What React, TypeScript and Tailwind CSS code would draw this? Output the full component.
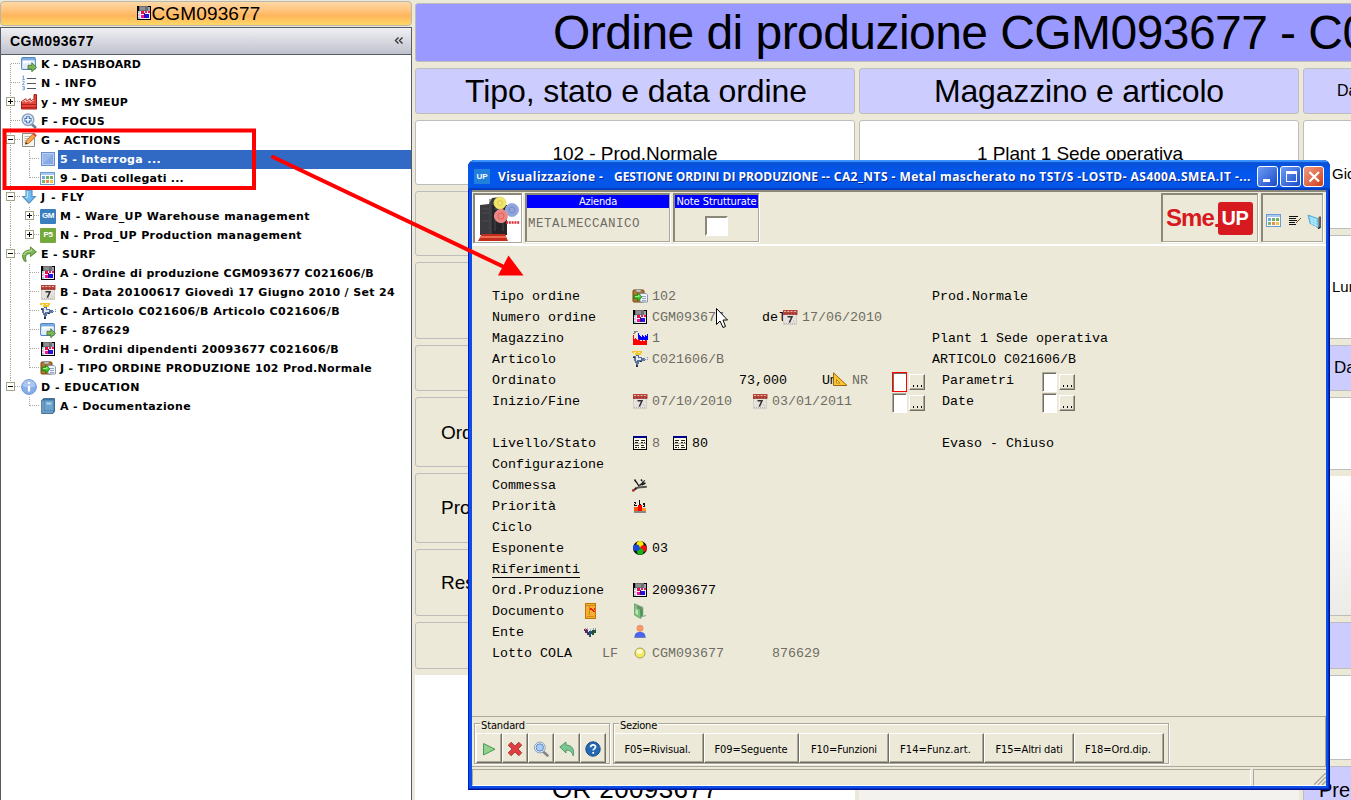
import React, { useLayoutEffect, useRef } from 'react';

/* Single-line text whose tracking is computed so that it spans `w` pixels. */
function Fit({ w, children, className = '' }: { w: number; children: string; className?: string }) {
  const ref = useRef<HTMLSpanElement>(null);
  useLayoutEffect(() => {
    const el = ref.current;
    if (!el) return;
    el.style.letterSpacing = '0px';
    const natural = el.getBoundingClientRect().width;
    el.style.letterSpacing = `${(w - natural) / children.length}px`;
  }, [w, children]);
  return (
    <span ref={ref} className={`inline-block whitespace-pre ${className}`}>
      {children}
    </span>
  );
}

function Svg({ children, className = 'mb-px h-4 w-4', box = '0 0 16 16', crisp = false }: { children: React.ReactNode; className?: string; box?: string; crisp?: boolean }) {
  return (
    <svg viewBox={box} className={`shrink-0 ${className}`} shapeRendering={crisp ? 'crispEdges' : 'auto'}>
      {children}
    </svg>
  );
}

/* ---------- icons ---------- */
const OrderIcon = () => (
  <Svg crisp>
    <rect x="1" y="1" width="14" height="14" fill="#000" />
    <rect x="3" y="1" width="9" height="5" fill="#6f6f6f" />
    <rect x="4" y="2" width="5" height="3" fill="#8e8e8e" />
    <rect x="12" y="2" width="2" height="4" fill="#9ea2b4" />
    <rect x="2" y="6" width="12" height="8" fill="#f4eef4" />
    <rect x="2" y="6" width="2" height="2" fill="#8fd8e4" />
    <rect x="5" y="6" width="3" height="3" fill="#e81048" />
    <rect x="9" y="6" width="2" height="2" fill="#d82070" />
    <rect x="12" y="6" width="2" height="2" fill="#e02050" />
    <rect x="2" y="9" width="2" height="2" fill="#e8b0e0" />
    <rect x="2" y="12" width="2" height="2" fill="#90d0d8" />
    <rect x="5" y="10" width="3" height="3" fill="#f0109a" />
    <rect x="9" y="9" width="4" height="4" fill="#2010f0" />
    <rect x="8" y="8" width="1" height="5" fill="#501040" />
  </Svg>
);
const WindowGoIcon = () => (
  <Svg>
    <rect x=".7" y="1.7" width="13.6" height="11.6" rx="1" fill="#fff" stroke="#4e86c6" strokeWidth="1.2" />
    <rect x="1" y="2" width="13" height="2.4" fill="#7aa9e0" />
    <path d="M1.4 8 L13.6 5 V12.6 H1.4Z" fill="#e4eefb" />
    <path d="M7 9.3 h3.8 v-2.6 l4.7 4.6 -4.7 4.4 v-2.5 h-3.8z" fill="#7cb45a" stroke="#467a30" strokeWidth=".9" />
  </Svg>
);
const ListIcon = () => (
  <Svg>
    <path d="M6 3.5h9M6 8.5h9M6 13.5h9" stroke="#51575f" strokeWidth="1.1" />
    <path d="M1.3 1.6 L2.5 .8 V4.4 M1.3 4.5h2.6 M1.2 6.3h2v1.5l-2 1.8h2.4 M1.2 11.4h2.2v3.4h-2.2 M1.6 13h1.8" fill="none" stroke="#7fa7dc" strokeWidth="1" />
  </Svg>
);
const FactoryRedIcon = () => (
  <Svg>
    <path d="M.5 15V7.5L5 4.7v2.6l4.3-2.6v2.6L13 5V.6h2.5V15z" fill="#e2463c" stroke="#a91b16" />
    <path d="M1.2 8 L4.6 5.8 V8.2 L9 6 v2.2L12.8 6" stroke="#ffc5b5" fill="none" />
    <path d="M1 10.500h14M1 13.5h14" stroke="#b51f1a" strokeWidth="1.1" />
  </Svg>
);
const ZoomPlusIcon = () => (
  <Svg>
    <path d="M10.5 11l4.5 4" stroke="#6d7f98" strokeWidth="2.6" />
    <circle cx="7" cy="6.7" r="5.8" fill="#e8f2ff" stroke="#93a4ba" strokeWidth="1.5" />
    <circle cx="7" cy="6.7" r="4.4" fill="#cfe2fb" />
    <path d="M7 3.2v7M3.5 6.700h7" stroke="#3c70b8" strokeWidth="3.6" />
    <path d="M7 4v5.400M4.300 6.700h5.400" stroke="#fff" strokeWidth="1.500" />
  </Svg>
);
const EditIcon = () => (
  <Svg>
    <path d="M1.5 1.5h12v13h-12z" fill="#f6f6f2" stroke="#8f8f8a" />
    <path d="M3.5 4.5h6M3.5 6.5h5M3.5 8.5h3M3.5 10.5h2" stroke="#b9b9b4" />
    <path d="M4.3 12.2l1-3.6 6.7-6.7 2.7 2.6-6.8 6.8z" fill="#f7a44a" stroke="#b45d17" strokeWidth=".8" />
    <path d="M11.7 1.9l1.2-1.2 3 2.5-1.3 1.5z" fill="#e8403c" />
    <path d="M4.3 12.2l.7-2 1.5 1.3z" fill="#222" />
  </Svg>
);
const BlueSquareIcon = () => (
  <Svg>
    <rect x="1.5" y="1.5" width="13" height="13" fill="#86a8e4" stroke="#6a90cf" />
    <rect x="2.5" y="2.5" width="11" height="11" fill="none" stroke="#b7cdf2" />
    <path d="M3 3h10L3 13z" fill="#9ab8ec" />
  </Svg>
);
const TableIcon = () => (
  <Svg crisp>
    <rect x="0" y="2" width="15" height="13" rx="1" fill="#6d9cd4" />
    <rect x="1" y="3" width="13" height="2" fill="#a9c8ef" />
    <rect x="1" y="5" width="13" height="9" fill="#fff" />
    <rect x="2" y="6" width="3" height="3" fill="#78a5dc" />
    <rect x="6" y="6" width="3" height="3" fill="#74b060" />
    <rect x="10" y="6" width="3" height="3" fill="#74b060" />
    <rect x="2" y="10" width="3" height="3" fill="#7fb468" />
    <rect x="6" y="10" width="3" height="3" fill="#f08a4a" />
    <rect x="10" y="10" width="3" height="3" fill="#ecc548" />
  </Svg>
);
const DownIcon = () => (
  <Svg>
    <path d="M5 1.2h6v6.3h3.4L8 14.2 1.6 7.5H5z" fill="#6cbdf3" stroke="#5c8fb8" strokeWidth="1.1" />
    <path d="M6.3 2v6.5H4.5" stroke="#d3f0ff" fill="none" />
  </Svg>
);
const Badge = ({ t, c }: { t: string; c: string }) => (
  <span className={`mb-px flex h-[15px] w-4 shrink-0 items-center justify-center rounded-[1px] font-['Liberation_Sans'] text-[8px] font-bold leading-none tracking-[-0.5px] text-white ${c}`}>{t}</span>
);
const TurnIcon = () => (
  <Svg>
    <path d="M3.6 15.3C-.7 9.5 2.3 4 9.4 4V.9l6 5-6 4.7V7.5C5.200 7.500 3.600 10.500 5.200 15.300z" fill="#7fb851" stroke="#4c7f2c" strokeWidth=".9" />
    <path d="M2.700 9C4 5.500 7 5 10.200 5V2.800" stroke="#c4e6a0" fill="none" />
  </Svg>
);
const CalendarIcon = () => (
  <Svg>
    <rect x="1.500" y="2.500" width="13" height="13" fill="#e6e2dd" stroke="#d3cec8" />
    <rect x="1" y="1" width="14.500" height="4.800" fill="#b5453b" />
    <path d="M2 2.500h13" stroke="#e9b4a8" strokeDasharray="2 1.300" />
    <path d="M1 5h14" stroke="#8d2a24" strokeDasharray="2 1" />
    <path d="M5.500 7.800h4.500L7.300 13.600" fill="none" stroke="#333" strokeWidth="1.500" />
    <path d="M2 14.500h12M11 11.500l3 2" stroke="#b8b4ae" strokeDasharray="1 1" />
  </Svg>
);
const ArticleIcon = () => (
  <Svg crisp>
    <path d="M0 0h10v2H9v2H3V2H0z" fill="#f7c52a" />
    <path d="M2 1h2v1H2zM6 1h2v1H6z" fill="#fff3a0" />
    <path d="M4 4h3v2h3v1h3v3H9v1H7v2H6v2H4v-3H3v-2H2V7H1V5h3z" fill="#5a719c" />
    <path d="M4 5h2v2h3v2H5v1H4z" fill="#e0e8f8" />
    <path d="M1 6h2v1H1zM8 10h2v1H8zM4 14h2v2H4z" fill="#22304f" />
    <path d="M12 8h2v1h-2zM15 6h1v1h-1zM15 8h1v1h-1z" fill="#7d93c4" />
  </Svg>
);
const TypeIcon = () => (
  <Svg>
    <rect x="1" y="2" width="11" height="12" rx="1" fill="#b5772b" stroke="#754711" />
    <path d="M4 1.500h5v2.500H4z" fill="#c9c9c9" stroke="#777" strokeWidth=".6" />
    <path d="M8 5.500h6l1.500 1.500v7H8z" fill="#f0f4fb" stroke="#7285a5" strokeWidth=".8" />
    <path d="M10 8.500h4M10 10.500h4M10 12.500h4" stroke="#8b9bb8" strokeWidth=".9" />
    <path d="M2.200 7.300h3.300V5l4.500 4-4.500 4v-2.400H2.200z" fill="#37c82b" stroke="#107a10" strokeWidth=".7" />
    <path d="M3 8.500h3.500V7l1.500 1.700" stroke="#bdf7a0" fill="none" strokeWidth=".8" />
  </Svg>
);
const InfoIcon = () => (
  <Svg>
    <circle cx="8" cy="8" r="7.400" fill="#86aee8" stroke="#7196d8" />
    <path d="M1.500 7a6.500 6 0 0113 0c-4 2-9 2-13 0z" fill="#a9c6f2" />
    <path d="M8 3v2M8 6.800v5.700" stroke="#fff" strokeWidth="2.200" />
  </Svg>
);
const BookIcon = () => (
  <Svg>
    <path d="M1.700 2.500L3.500.600h11v13l-1.700 2H1.700z" fill="#3d76a8" stroke="#285680" strokeWidth=".8" />
    <path d="M4.500 2.500h9v10h-9z" fill="#6ea3cc" />
    <path d="M6.500 4.500h5v2h-5z" fill="#b6d4ea" />
    <path d="M3 2.500V15M4 14h9" stroke="#b9d8ee" strokeWidth=".8" />
  </Svg>
);
const FactoryIcon = () => (
  <Svg crisp>
    <path d="M2 1h4v1H4v1H2zM1 3h2v1H1z" fill="#888" />
    <path d="M6 10V3h1v2h1v1h1v1h1V5h1v1h1v1h1V5h1v1h1V4h1v6z" fill="#00f" />
    <path d="M1 15V5h1v4h1V8h1v1h1v1h1V9h1v1h1v1h2v-1h1v1h2v-1h2v5z" fill="#f00" />
  </Svg>
);
const LevelIcon = () => (
  <Svg crisp>
    <rect x="1" y="1" width="14" height="14" fill="#000" />
    <rect x="2" y="3" width="12" height="11" fill="#fbf8e4" />
    <rect x="1" y="1" width="14" height="2" fill="#00008f" />
    <path d="M3 5h4v1H3zM9 5h4v1H9zM3 7h3v1H3zM9 7h2v1H9zM12 7h1v1h-1zM3 10h4v1H3zM9 10h3v1H9zM3 12h2v1H3zM6 12h1v1H6zM9 12h4v1H9z" fill="#222" />
    <path d="M2 8h12v1H2z" fill="#aaa" />
  </Svg>
);
const CommessaIcon = () => (
  <Svg>
    <path d="M.8 13.600L6 10.500 14.800 9.800" stroke="#555" strokeWidth="2" fill="none" />
    <path d="M2.500 2.500L7 9.500M7.500 8.500L13 3.500M9 2.500l1.500 2M13.500 6L9.500 8M4 10.500L3 12.500" stroke="#1c1c1c" strokeWidth="1.500" fill="none" />
    <path d="M3.200 5.500L6 9.500M10.500 3.500L8.500 6.500M12.500 5l1-1.500" stroke="#fff" strokeWidth=".8" />
    <path d="M0 12.500h2.500v2H0z" fill="#c22" />
  </Svg>
);
const PriorityIcon = () => (
  <Svg crisp>
    <path d="M2 9h4v4H2z" fill="#f50" />
    <path d="M6 7h4v6H6z" fill="#f00" />
    <path d="M10 10h4v3h-4z" fill="#ff9a20" />
    <path d="M2 13h12v2H2z" fill="#888" />
    <path d="M7 2h1v4h1v1H7V3H6zM2 4h2v2H3v1h2v1H2V6h1V5H2zM11 5h2v4h-2V8h1V7h-1z" fill="#111" />
  </Svg>
);
const BallIcon = () => (
  <Svg>
    <circle cx="8" cy="8" r="7" fill="#111" />
    <circle cx="8" cy="4.600" r="3.500" fill="#fbe800" />
    <circle cx="11.500" cy="8.500" r="3.300" fill="#ee1111" />
    <circle cx="8.200" cy="11.600" r="3.200" fill="#10b510" />
    <circle cx="4.400" cy="7.800" r="3.300" fill="#1a48d8" />
  </Svg>
);
const DoorIcon = () => (
  <Svg className="mb-px h-4 w-[13px]" box="0 0 13 16" crisp>
    <rect x="1" y="0" width="11" height="16" fill="#c07808" />
    <rect x="2" y="1" width="9" height="14" fill="#f9ad2e" />
    <path d="M2 2h9v1H2zM5 3h1v9H5zM3 13h7v1H3z" fill="#c98a20" />
    <path d="M6 5h2v1h1v1h1V5h1v2h-1v1h1v1H9V8H8V7H6z" fill="#f21a10" />
  </Svg>
);
const DocIcon = () => (
  <Svg>
    <path d="M2.500.8l5.500 2.500 2.800 1v8L8.500 15.500l-6-3.500z" fill="#7cc27c" stroke="#5ea062" strokeWidth=".8" />
    <path d="M8 5.500h2.500v7L8.500 14.800z" fill="#4a9256" />
    <path d="M3.500 6l2.500 1.500v4.500L3.500 10.500z" fill="#bfe6b8" />
    <path d="M5 2.500l4.500 1.800v3L5.500 5.500z" fill="#76857a" />
    <path d="M10.500 13.500l3.500-1" stroke="#999" strokeWidth="1.300" />
  </Svg>
);
const PeopleIcon = () => (
  <Svg className="mb-px h-4 w-[13px]" box="0 0 13 16" crisp>
    <path d="M0 5h4v3h1v3H3V9H1V7H0z" fill="#4d2b66" />
    <path d="M1 4h1v2H1zM3 4h1v2H3z" fill="#d08a98" />
    <path d="M5 7h3v3H7v3H5z" fill="#1c5474" />
    <path d="M6 5h1v2H6z" fill="#8ab6d0" />
    <path d="M8 6h4v3h-2v2H8z" fill="#24503c" />
    <path d="M9 4h1v2H9zM11 4h1v2h-1z" fill="#7aa0a8" />
  </Svg>
);
const PersonIcon = () => (
  <Svg>
    <path d="M2.500 13.500C2.500 9 5 8 8 8s5.500 1 5.500 5.500z" fill="#4a66ee" />
    <path d="M2.500 13.500h11" stroke="#777fae" />
    <circle cx="8" cy="4.300" r="3.100" fill="#f89a68" stroke="#d97850" strokeWidth=".6" />
  </Svg>
);
const LotIcon = () => (
  <Svg>
    <circle cx="8" cy="8" r="5" fill="#f4ea62" stroke="#a6a05a" />
    <ellipse cx="7.500" cy="6.500" rx="3" ry="2.300" fill="#fffbd0" />
  </Svg>
);
const RulerIcon = () => (
  <Svg>
    <path d="M1.500 .8L15 13.500H1.500z" fill="#ffc629" stroke="#9a6410" />
    <path d="M4.500 7.500l3.500 3.500H4.500z" fill="#fff0a0" stroke="#b77a14" strokeWidth=".9" />
  </Svg>
);
const NoteIcon = () => (
  <Svg className="h-4 w-[14px]" box="0 0 14 16" crisp>
    <path d="M1 3h9v1H1zM1 5h7v1H1zM1 7h8v1H1zM1 9h6v1H1zM1 11h7v1H1z" fill="#111" />
    <path d="M12 5h1v1h-1v1h-1v1h-1v1H9v1H8V9h1V8h1V7h1V6h1z" fill="#7b4a14" />
  </Svg>
);
const NotebookIcon = () => (
  <Svg className="h-4 w-[14px]" box="0 0 14 16">
    <path d="M1 2l9.500 3.500L12 15l-9-4.500z" fill="#6fcdf5" stroke="#3f9ad0" strokeWidth=".7" />
    <path d="M2.500 4.500l7.500 3M3 7l7.500 3M3.500 9.500l7.500 3.500M5 4v8M8 5v9" stroke="#d8f6ff" strokeWidth=".7" />
    <path d="M13 3.500v11l-2 1" stroke="#111" strokeWidth="1.300" fill="none" />
    <path d="M11.700 4v10" stroke="#888" strokeWidth="1" />
  </Svg>
);

/* ---------- tree ---------- */
type Guide = 'tee' | 'end' | 'line' | 'none' | 'start';
const GuideCell = ({ kind, box, w }: { kind: Guide; box?: '+' | '-'; w: 19 | 20 }) => (
  <svg className={w === 20 ? 'h-[19px] w-5 shrink-0' : 'h-[19px] w-[19px] shrink-0'} viewBox={`0 0 ${w} 19`} shapeRendering="crispEdges">
    {kind !== 'none' && (
      <path d={kind === 'line' || kind === 'tee' ? 'M9.500 0V19' : kind === 'start' ? 'M9.500 9V19' : 'M9.500 0V9'} stroke="#a9a795" strokeDasharray="1 1" fill="none" />
    )}
    {(kind === 'tee' || kind === 'end' || kind === 'start') && <path d="M10 8.500H20" stroke="#a9a795" strokeDasharray="1 1" />}
    {box && (
      <>
        <rect x="5.500" y="4.500" width="8" height="8" fill="#fff" stroke="#a5a28c" />
        <path d={box === '+' ? 'M7 8.500h5M9.500 6v5' : 'M7 8.500h5'} stroke="#000" />
      </>
    )}
  </svg>
);
type Node = { t: string; w: number; icon: React.ReactNode; g: Guide; lv: 1 | 2; box?: '+' | '-'; sel?: boolean; last?: boolean };
const nodes: Node[] = [
  { t: 'K - DASHBOARD', w: 100, icon: <WindowGoIcon />, g: 'start', lv: 1 },
  { t: 'N - INFO', w: 56, icon: <ListIcon />, g: 'tee', lv: 1 },
  { t: 'y - MY SMEUP', w: 87, icon: <FactoryRedIcon />, g: 'tee', lv: 1, box: '+' },
  { t: 'F - FOCUS', w: 64, icon: <ZoomPlusIcon />, g: 'tee', lv: 1 },
  { t: 'G - ACTIONS', w: 80, icon: <EditIcon />, g: 'tee', lv: 1, box: '-' },
  { t: '5 - Interroga ...', w: 101, icon: <BlueSquareIcon />, g: 'tee', lv: 2, sel: true },
  { t: '9 - Dati collegati ...', w: 124, icon: <TableIcon />, g: 'end', lv: 2 },
  { t: 'J - FLY', w: 44, icon: <DownIcon />, g: 'tee', lv: 1, box: '-' },
  { t: 'M - Ware_UP Warehouse management', w: 250, icon: <Badge t="GM" c="bg-[#3b7fc0]" />, g: 'tee', lv: 2, box: '+' },
  { t: 'N - Prod_UP Production management', w: 242, icon: <Badge t="P5" c="bg-[#74a93c]" />, g: 'end', lv: 2, box: '+' },
  { t: 'E - SURF', w: 55, icon: <TurnIcon />, g: 'tee', lv: 1, box: '-' },
  { t: 'A - Ordine di produzione CGM093677 C021606/B', w: 314, icon: <OrderIcon />, g: 'tee', lv: 2 },
  { t: 'B - Data 20100617 Giovedì 17 Giugno 2010 / Set 24', w: 335, icon: <CalendarIcon />, g: 'tee', lv: 2 },
  { t: 'C - Articolo C021606/B Articolo C021606/B', w: 280, icon: <ArticleIcon />, g: 'tee', lv: 2 },
  { t: 'F - 876629', w: 70, icon: <WindowGoIcon />, g: 'tee', lv: 2 },
  { t: 'H - Ordini dipendenti 20093677 C021606/B', w: 279, icon: <OrderIcon />, g: 'tee', lv: 2 },
  { t: 'J - TIPO ORDINE PRODUZIONE 102 Prod.Normale', w: 312, icon: <TypeIcon />, g: 'end', lv: 2 },
  { t: 'D - EDUCATION', w: 99, icon: <InfoIcon />, g: 'end', lv: 1, box: '-' },
  { t: 'A - Documentazione', w: 131, icon: <BookIcon />, g: 'end', lv: 2, last: true },
];

function Sidebar() {
  return (
    <aside className="flex h-full w-[412px] shrink-0 flex-col">
      <div className="flex h-[27px] pt-px">
        <div className="flex h-[25px] w-full items-center justify-center rounded-[4px] border border-[#b9b7ad] bg-linear-to-b from-[#ffd9a6] from-0% via-[#ffb55c] via-60% to-[#ffd766] to-100% pr-4">
          <OrderIcon />
          <Fit w={109} className="mt-px font-['Liberation_Sans'] text-[19px] leading-6">CGM093677</Fit>
        </div>
      </div>
      <div className="flex min-h-0 flex-1 flex-col border border-b-0 border-[#565b68] bg-white">
        <div className="flex h-[27px] shrink-0 items-center justify-between border-b border-[#565b68] bg-linear-to-b from-[#f1f1f4] to-[#bfc1cd] pl-[9px] pr-[7px]">
          <Fit w={84} className="font-['Liberation_Sans'] text-[14px] font-bold">CGM093677</Fit>
          <svg viewBox="0 0 10 10" className="h-[10px] w-[10px]">
            <path d="M4.500 1.500L1.500 4.500l3 3M8.500 1.500L5.500 4.500l3 3" fill="none" stroke="#333" strokeWidth="1.400" />
          </svg>
        </div>
        <div className="flex flex-col">
          {nodes.map((n) => (
            <div key={n.t} className="flex h-[19px] items-center">
              {n.lv === 2 && <GuideCell kind={n.last ? 'none' : 'line'} w={19} />}
              <GuideCell kind={n.g} box={n.box} w={20} />
              {n.icon}
              <div className={`ml-[2px] flex h-[19px] flex-1 items-center pl-[2px] ${n.sel ? 'bg-[#316ac5] text-white' : 'text-black'}`}>
                <Fit w={n.w} className="font-['DejaVu_Sans'] text-[11px] font-bold leading-[19px]">{n.t}</Fit>
              </div>
            </div>
          ))}
        </div>
      </div>
    </aside>
  );
}

/* ---------- sheet behind the dialog ---------- */
const Cell = ({ c, children }: { c: string; children?: React.ReactNode }) => (
  <div className={`flex w-full shrink-0 items-center overflow-hidden whitespace-nowrap rounded-[3px] border border-[#bdbdbd] ${c}`}>{children}</div>
);

function Sheet() {
  return (
    <main className="flex min-w-0 flex-1 flex-col gap-[6px] overflow-hidden pl-[3px] pt-[3px] font-['Liberation_Sans'] text-black">
      <div className="flex h-[59px] w-[1200px] shrink-0 items-center rounded-[3px] border border-[#bdbdbd] bg-[#9999ff] pl-[137px]">
        <span className="whitespace-nowrap text-[48px] leading-none tracking-[-0.56px]">Ordine di produzione CGM093677 - C021606/B</span>
      </div>
      <div className="flex w-[1200px] gap-1">
        <div className="flex w-[440px] shrink-0 flex-col gap-[6px]">
          <Cell c="h-[46px] justify-center bg-[#ccccff] pl-[2px]"><Fit w={342} className="text-[32px] leading-none">Tipo, stato e data ordine</Fit></Cell>
          <Cell c="h-[65px] justify-center bg-white pt-[3px]"><Fit w={165} className="text-[19px]">102 - Prod.Normale</Fit></Cell>
          <Cell c="h-[65px]" />
          <Cell c="h-[77px]" />
          <Cell c="h-[46px]" />
          <Cell c="h-[70px] pl-[25px] pt-[2px] text-[19px]">Ord.</Cell>
          <Cell c="h-[70px] pl-[25px] pt-px text-[19px]">Prod.</Cell>
          <Cell c="h-[67px] pl-[25px] pt-px text-[19px]">Res.</Cell>
          <Cell c="h-[47px]" />
          <div className="flex h-[232px] items-center justify-center bg-white pb-[4px]"><Fit w={166} className="text-[26px]">OR 20093677</Fit></div>
        </div>
        <div className="flex w-[440px] shrink-0 flex-col gap-[6px]">
          <Cell c="h-[46px] justify-center bg-[#ccccff]"><Fit w={290} className="text-[32px] leading-none">Magazzino e articolo</Fit></Cell>
          <Cell c="h-[65px] justify-center bg-white pl-[2px] pt-[3px]"><Fit w={206} className="text-[19px]">1 Plant 1 Sede operativa</Fit></Cell>
          <div className="h-[620px] bg-[#f4f2ee]" />
        </div>
        <div className="flex w-[300px] shrink-0 flex-col gap-[6px]">
          <Cell c="h-[46px] bg-[#ccccff] pl-[33px] text-[16px]">Data</Cell>
          <Cell c="h-[109px] bg-white pl-[28px] text-[15px]">Giovedì</Cell>
          <Cell c="h-[104px] bg-white pl-[28px] text-[15px]">Lunedì</Cell>
          <Cell c="h-[46px] bg-[#ccccff] pl-[30px] text-[17px]">Data</Cell>
          <Cell c="h-[73px] bg-white" />
          <Cell c="h-[140px] rounded-none border-t-0 bg-linear-to-b from-white to-[#ecebe8]" />
          <Cell c="h-[47px] bg-[#ccccff]" />
          <Cell c="h-[85px] bg-white" />
          <Cell c="h-[47px] bg-[#ccccff] pl-[15px] text-[20px]">Prelievo</Cell>
        </div>
      </div>
    </main>
  );
}

/* ---------- dialog ---------- */
const Slot = ({ c, gray, children }: { c: string; gray?: boolean; children?: React.ReactNode }) => (
  <div className={`flex h-[21px] shrink-0 items-center whitespace-pre ${gray ? 'text-[#6e6c64]' : 'text-black'} ${c}`}>{children}</div>
);
const Row = ({ label, u, children }: { label: string; u?: boolean; children?: React.ReactNode }) => (
  <div className="flex h-[21px] items-center">
    <Slot c="w-[92px]"><span className={u ? 'border-b border-black leading-[15px]' : ''}>{label}</span></Slot>
    {children}
  </div>
);
const Field = ({ red }: { red?: boolean }) => (
  <div className={`mt-[3px] h-5 w-[15px] shrink-0 border bg-white ${red ? 'border-[#ff0000]' : 'border-b-white border-l-[#aca899] border-r-white border-t-[#aca899]'}`}>
    <div className="h-full w-full border-l border-t border-[#716f64]" />
  </div>
);
const Dots = () => (
  <div className="ml-[2px] mt-[3px] flex h-4 w-4 shrink-0 items-end justify-center border border-b-[#716f64] border-l-white border-r-[#716f64] border-t-white bg-[#ece9d8] shadow-[inset_-1px_-1px_0_#aca899]">
    <svg viewBox="0 0 12 4" className="mb-px h-1 w-3" shapeRendering="crispEdges"><path d="M2 1h1v2H2zM6 1h1v2H6zM10 1h1v2h-1z" fill="#000" /></svg>
  </div>
);

function Form() {
  return (
    <div className="flex flex-1 flex-col pl-5 pt-10 font-['Liberation_Mono'] text-[13.33px] leading-none">
      <Row label="Tipo ordine"><Slot c="ml-12 w-5"><TypeIcon /></Slot><Slot c="w-[280px]" gray>102</Slot><Slot c="">Prod.Normale</Slot></Row>
      <Row label="Numero ordine"><Slot c="ml-12 w-5"><OrderIcon /></Slot><Slot c="w-[110px]" gray>CGM093677</Slot><Slot c="w-5">del</Slot><Slot c="z-10 w-5"><CalendarIcon /></Slot><Slot c="" gray>17/06/2010</Slot></Row>
      <Row label="Magazzino"><Slot c="ml-12 w-5"><FactoryIcon /></Slot><Slot c="w-[280px]" gray>1</Slot><Slot c="">Plant 1 Sede operativa</Slot></Row>
      <Row label="Articolo"><Slot c="ml-12 w-5"><ArticleIcon /></Slot><Slot c="w-[280px]" gray>C021606/B</Slot><Slot c="">ARTICOLO C021606/B</Slot></Row>
      <Row label="Ordinato"><Slot c="ml-[155px] w-[83px]">73,000</Slot><Slot c="w-[10px]">Um</Slot><Slot c="z-10 w-5"><RulerIcon /></Slot><Slot c="w-10" gray>NR</Slot><Field red /><Dots /><Slot c="ml-[17px] w-[100px]">Parametri</Slot><Field /><Dots /></Row>
      <Row label="Inizio/Fine"><Slot c="ml-12 w-5"><CalendarIcon /></Slot><Slot c="w-[100px]" gray>07/10/2010</Slot><Slot c="w-5"><CalendarIcon /></Slot><Slot c="w-[120px]" gray>03/01/2011</Slot><Field /><Dots /><Slot c="ml-[17px] w-[100px]">Date</Slot><Field /><Dots /></Row>
      <Row label="" />
      <Row label="Livello/Stato"><Slot c="ml-12 w-5"><LevelIcon /></Slot><Slot c="w-5" gray>8</Slot><Slot c="w-5"><LevelIcon /></Slot><Slot c="w-[250px]">80</Slot><Slot c="">Evaso - Chiuso</Slot></Row>
      <Row label="Configurazione" />
      <Row label="Commessa"><Slot c="ml-12"><CommessaIcon /></Slot></Row>
      <Row label="Priorità"><Slot c="ml-12"><PriorityIcon /></Slot></Row>
      <Row label="Ciclo" />
      <Row label="Esponente"><Slot c="ml-12 w-5"><BallIcon /></Slot><Slot c="">03</Slot></Row>
      <Row label="Riferimenti" u />
      <Row label="Ord.Produzione"><Slot c="ml-12 w-5"><OrderIcon /></Slot><Slot c="">20093677</Slot></Row>
      <Row label="Documento"><Slot c="w-12"><DoorIcon /></Slot><Slot c=""><DocIcon /></Slot></Row>
      <Row label="Ente"><Slot c="w-12"><PeopleIcon /></Slot><Slot c=""><PersonIcon /></Slot></Row>
      <Row label="Lotto COLA"><Slot c="ml-[18px] w-[30px]" gray>LF</Slot><Slot c="w-5"><LotIcon /></Slot><Slot c="w-[120px]" gray>CGM093677</Slot><Slot c="" gray>876629</Slot></Row>
    </div>
  );
}

const sunken = 'border-t-2 border-l-2 border-b border-r border-t-[#8b887a] border-l-[#8b887a] border-b-[#aca899] border-r-[#aca899] shadow-[1px_1px_0_#fff]';

function Toolbar() {
  return (
    <div className="flex h-[56px] shrink-0 items-start gap-[3px] border-b-2 border-t-2 border-b-white border-t-[#8b887a] pl-px pr-[3px] pt-px font-['DejaVu_Sans_Condensed'] text-[11px]">
      <div className={`h-[50px] w-[49px] shrink-0 overflow-hidden bg-white ${sunken}`}>
        <svg viewBox="0 0 46 47" className="h-[47px] w-[46px]">
          <path d="M5 10l9-1 3-6 8-1v38H5z" fill="#3b3b3f" />
          <path d="M17 10h15v30H17z" fill="#26262a" />
          <path d="M7 14h7M7 18h7M19 14h9M19 26h10M7 26h7" stroke="#4c4c50" />
          <path d="M15 4v36M20 22v14M28 22v14" stroke="#48484c" />
          <path d="M7 39h23l3 7H3z" fill="#c22d1c" />
          <path d="M5 42h26" stroke="#ec6a52" strokeWidth="2" />
          <circle cx="25" cy="8" r="6" fill="#f2e76c" stroke="#e6da70" />
          <circle cx="25" cy="8" r="2.500" fill="none" stroke="#d8c95a" />
          <circle cx="37" cy="15" r="6.500" fill="#8fa3dc" stroke="#9dafe2" />
          <circle cx="37" cy="15" r="3" fill="none" stroke="#7489c8" />
          <circle cx="26" cy="21" r="6.500" fill="#ef8580" stroke="#f09a94" />
          <circle cx="26" cy="21" r="3" fill="none" stroke="#dc6460" />
          <path d="M31 27.500h14" stroke="#dc2c34" strokeWidth="2.500" strokeDasharray="2 .8" />
        </svg>
      </div>
      <div className={`flex h-[49px] w-[145px] flex-col ${sunken}`}>
        <div className="flex h-[13px] items-center justify-center bg-[#0000ff] pt-[2px] text-white"><Fit w={38}>Azienda</Fit></div>
        <div className="flex flex-1 items-center pl-px font-['Liberation_Mono'] text-[#6e6c64]"><Fit w={112} className="text-[12.500px]">METALMECCANICO</Fit></div>
      </div>
      <div className={`flex h-[49px] w-[86px] flex-col items-center ${sunken}`}>
        <div className="flex h-[13px] w-full items-center justify-center bg-[#0000ff] pt-[2px] text-white"><Fit w={80}>Note Strutturate</Fit></div>
        <div className="mt-[8px] h-5 w-[23px] border-2 border-b-white border-l-[#8b887a] border-r-white border-t-[#8b887a] bg-white" />
      </div>
      <div className="flex-1" />
      <div className={`flex h-[49px] w-[97px] items-center pl-[3px] font-['Liberation_Sans'] font-bold leading-none ${sunken}`}>
        <Fit w={48} className="text-[24px] text-[#d71920]">Sme</Fit>
        <span className="mt-[3px] text-[20px] text-[#d71920]">.</span>
        <div className="-ml-[2px] flex h-[33px] w-[35px] items-center justify-center rounded-[3px] bg-[#d71920] text-white"><Fit w={27} className="text-[20px]">UP</Fit></div>
      </div>
      <div className={`flex h-[49px] w-[62px] items-center overflow-hidden pl-[3px] pt-[5px] ${sunken}`}>
        <TableIcon /><div className="ml-[6px]"><NoteIcon /></div><div className="ml-[5px]"><NotebookIcon /></div>
      </div>
    </div>
  );
}

const raised = 'border border-t-white border-l-white border-b-[#716f64] border-r-[#716f64] shadow-[inset_-1px_-1px_0_#aca899] bg-[#ece9d8]';
const Group = ({ title, w, c, children }: { title: string; w: number; c: string; children: React.ReactNode }) => (
  <div className={`relative flex h-[41px] shrink-0 items-end border border-[#aca899] shadow-[inset_1px_1px_0_#fff,1px_1px_0_#fff] ${c}`}>
    <span className="absolute left-[5px] top-[-5px] flex h-3 items-center bg-[#ece9d8] px-px"><Fit w={w}>{title}</Fit></span>
    {children}
  </div>
);
const Btn = ({ c, children }: { c: string; children: React.ReactNode }) => <div className={`flex h-[30px] shrink-0 items-center justify-center pt-[2px] ${raised} ${c}`}>{children}</div>;

function Footer() {
  return (
    <div className="flex h-[70px] shrink-0 flex-col border-t border-[#aca899] font-['DejaVu_Sans_Condensed'] text-[11px] leading-none text-black">
      <div className="flex h-[50px] items-start gap-[3px] border-b border-r border-[#aca899] pl-[2px] pt-[6px]">
        <Group title="Standard" w={44} c="w-[136px] pl-px">
          <Btn c="w-[26px]"><Svg><path d="M2.500 2.500L14 8.200 2.500 14z" fill="#8fd18f" stroke="#4e9a54" /></Svg></Btn>
          <Btn c="w-[26px]"><Svg><path d="M4.200 1.200L8 5l3.800-3.800 3 3L11 8l3.800 3.800-3 3L8 11l-3.800 3.800-3-3L5 8 1.200 4.200z" fill="#dc4040" stroke="#a92a2a" strokeWidth=".8" /></Svg></Btn>
          <Btn c="w-[26px]"><Svg><path d="M10 10.500l4.500 4" stroke="#858585" strokeWidth="2.600" strokeLinecap="round" /><circle cx="6.800" cy="6.500" r="5.400" fill="#eef4fc" stroke="#8a9db8" /><circle cx="6.800" cy="6.500" r="3.700" fill="#a9cdf4" stroke="#5b87c0" /></Svg></Btn>
          <Btn c="w-[26px]"><Svg><path d="M.8 6L7 1v3c6 .3 8.700 4 7.200 10.800C13.200 11 11 9 7 9v3z" fill="#7cc694" stroke="#3e8a5a" strokeWidth=".8" /></Svg></Btn>
          <Btn c="w-[26px]"><Svg><circle cx="8" cy="8" r="7.200" fill="#2468b4" stroke="#174a88" /><path d="M5.600 6.200C5.600 3 10.600 3.200 10.500 6c0 1.700-2.300 1.700-2.300 3.600M8.200 11v1.800" fill="none" stroke="#fff" strokeWidth="1.700" /></Svg></Btn>
        </Group>
        <Group title="Sezione" w={37} c="w-[556px]">
          <Btn c="w-[90px] pr-[3px]"><Fit w={66}>F05=Rivisual.</Fit></Btn>
          <Btn c="w-[95px] pr-px"><Fit w={73}>F09=Seguente</Fit></Btn>
          <Btn c="w-[90px]"><Fit w={66}>F10=Funzioni</Fit></Btn>
          <Btn c="w-[95px] pr-[2px]"><Fit w={71}>F14=Funz.art.</Fit></Btn>
          <Btn c="w-[90px]"><Fit w={67}>F15=Altri dati</Fit></Btn>
          <Btn c="w-[90px] pr-[2px]"><Fit w={66}>F18=Ord.dip.</Fit></Btn>
        </Group>
      </div>
      <div className="mt-[2px] flex h-[17px] gap-[2px]">
        <div className="flex-1 border-b border-l border-r border-t border-b-white border-l-[#aca899] border-r-white border-t-[#aca899]" />
        <div className="flex w-[73px] items-end justify-end border-b border-l border-t border-b-white border-l-[#aca899] border-t-[#aca899]">
          <svg viewBox="0 0 12 12" className="h-3 w-3"><path d="M0 12L12 0M4 12l8-8M8 12l4-4" stroke="#aca899" strokeWidth="1.600" /><path d="M1.500 12L12 1.500M5.500 12L12 5.500" stroke="#fff" strokeWidth=".8" /></svg>
        </div>
      </div>
    </div>
  );
}

const winBtn = 'flex h-[21px] w-[21px] shrink-0 items-center justify-center rounded-[3px] border border-white';

function Dialog() {
  return (
    <section className="absolute left-[468px] top-[160px] flex h-[630px] w-[862px] flex-col overflow-hidden rounded-t-[7px] bg-[#0c4fe8] px-1 pb-1 shadow-[inset_1px_0_0_#0019c8,inset_-1px_-1px_0_#00138c,inset_-2px_-2px_0_#0030c8]">
      <header className="-mx-1 flex h-[30px] shrink-0 items-center bg-linear-to-b from-[#0a4ed0] from-0% via-[#0357ee] via-40% to-[#0455e6] to-100% pl-[6px] pr-[6px] pt-[3px] shadow-[inset_0_2px_1px_#3d95ff,inset_0_-2px_1px_#003cc0]">
        <span className="flex h-[15px] w-4 items-center justify-center bg-[#2080dc] font-['Liberation_Sans'] text-[8px] font-bold text-white">UP</span>
        <div className="ml-[8px] flex w-[760px] font-['Open_Sans'] text-[12px] font-bold leading-5 text-white [text-shadow:1px_1px_0_#06268c]">
          <Fit w={116}>Visualizzazione -   </Fit>
          <Fit w={204}>GESTIONE ORDINI DI PRODUZIONE</Fit>
          <Fit w={433}>{' -- CA2_NTS - Metal mascherato no TST/S -LOSTD- AS400A.SMEA.IT -...'}</Fit>
        </div>
        <div className="ml-auto flex gap-[2px]">
          <div className={`${winBtn} bg-linear-to-br from-[#6f9cf4] to-[#1d48c8]`}><Svg crisp><path d="M3 11h7v3H3z" fill="#fff" /></Svg></div>
          <div className={`${winBtn} bg-linear-to-br from-[#6f9cf4] to-[#1d48c8]`}><Svg crisp><path d="M3 3h11v11H3zM4 6v7h9V6z" fill="#fff" fillRule="evenodd" /></Svg></div>
          <div className={`${winBtn} bg-linear-to-br from-[#f09a80] to-[#d03a10]`}><Svg><path d="M3.500 4l9.500 9.500M13 4l-9.500 9.500" stroke="#fff" strokeWidth="2.200" /></Svg></div>
        </div>
      </header>
      <div className="flex min-h-0 flex-1 flex-col bg-[#ece9d8]">
        <Toolbar />
        <Form />
        <Footer />
      </div>
    </section>
  );
}

export default function App() {
  return (
    <div className="relative flex h-[800px] w-[1351px] overflow-hidden bg-[#ece9d8]">
      <Sidebar />
      <Sheet />
      <Dialog />
      <svg className="absolute left-0 top-0 h-[300px] w-[560px]" viewBox="0 0 560 300">
        <rect x="4.500" y="130.500" width="249.500" height="57.500" fill="none" stroke="#f00" strokeWidth="4" />
        <path d="M273 157L502 266" stroke="#f00" strokeWidth="4" strokeLinecap="round" />
        <path d="M508.500 255.500L523.500 275.500H498z" fill="#f00" />
      </svg>
      <svg className="absolute left-[715px] top-[307px] h-[22px] w-[14px]" viewBox="0 0 14 22">
        <path d="M1.500 1.500V17.500L5 14l3 6.500 2.500-1L8 13h4.500z" fill="#fff" stroke="#000" />
      </svg>
    </div>
  );
}
